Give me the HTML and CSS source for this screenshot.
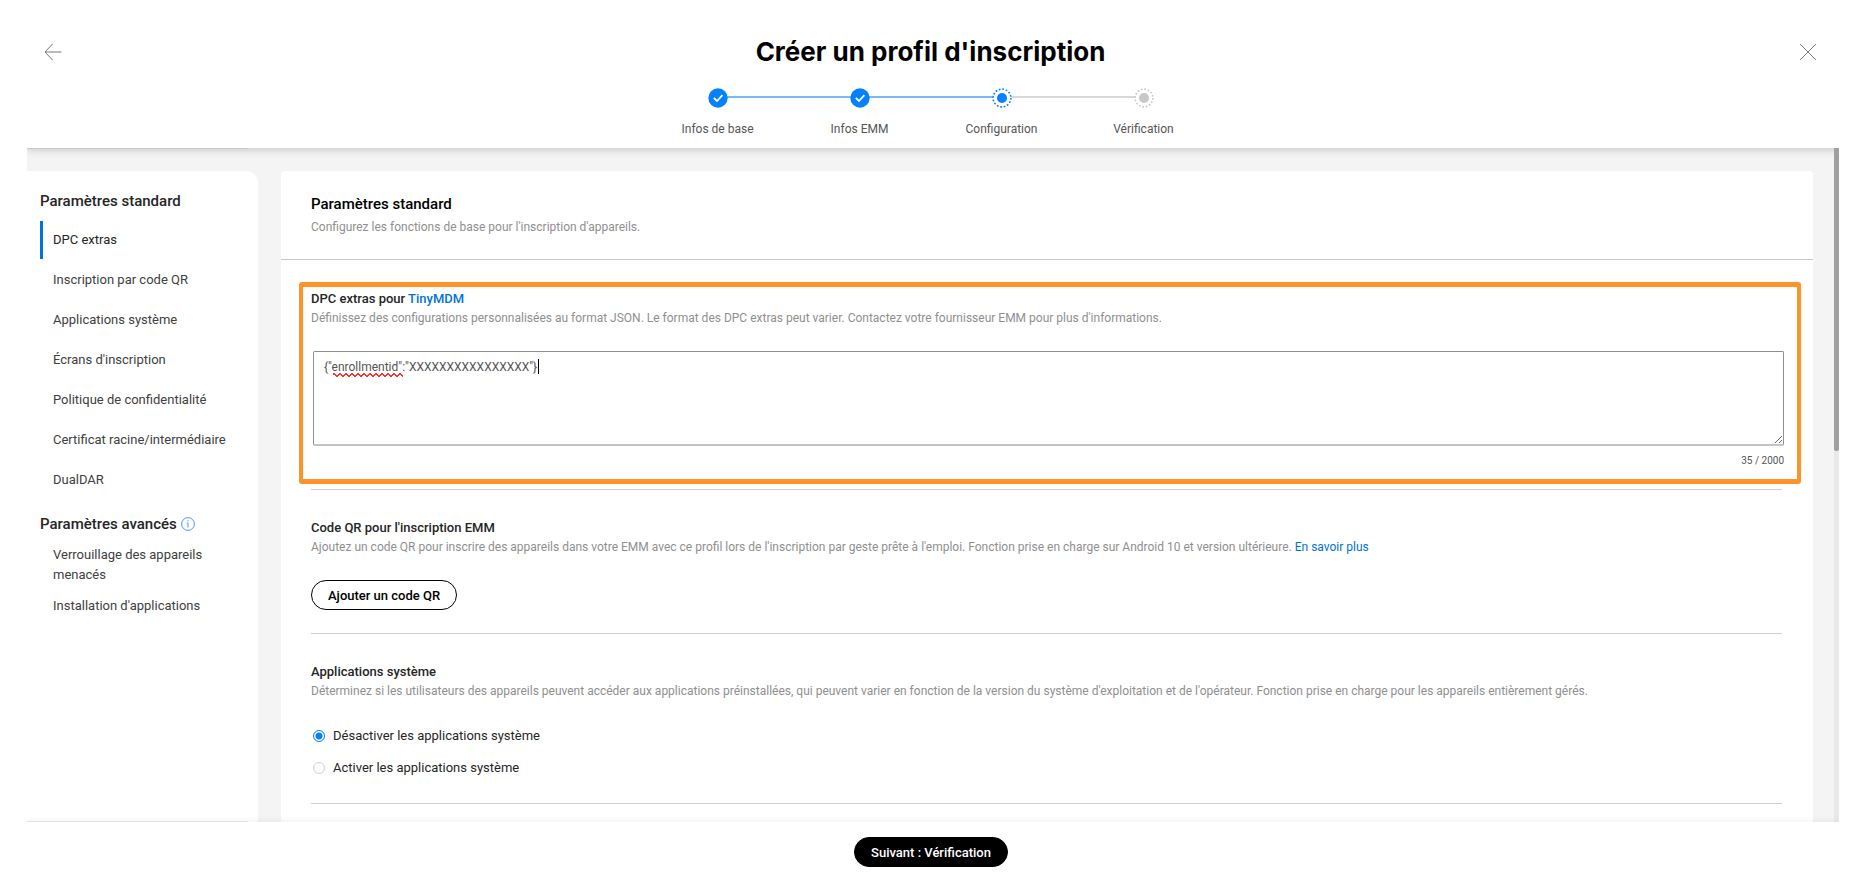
FILE: index.html
```html
<!DOCTYPE html>
<html lang="fr">
<head>
    <meta charset="UTF-8">
    <meta name="viewport" content="width=device-width, initial-scale=1.0">
    <title>Créer un profil d'inscription</title>
    <link rel="stylesheet" href="styles.css">
</head>
<body>

<div class="wizard">
    <!-- Header with title and progress steps -->
    <header class="header">
        <button class="icon-btn" type="button" aria-label="Retour">
            <svg width="18" height="18" viewBox="0 0 18 18"><path d="M8.500 1L1 9l7.500 8M1 9h16.500" /></svg>
        </button>
        <div class="header-center">
            <h1>Créer un profil d'inscription</h1>
            <ol class="steps">
                <li class="step done">
                    <svg class="step-icon" width="20" height="20" viewBox="0 0 20 20">
                        <circle cx="10" cy="10" r="9.700" fill="#0381fe" />
                        <path d="M5.800 9.800l3.200 3.200 5.400-5.900" fill="none" stroke="#fff" stroke-width="1.800" />
                    </svg>
                    <span>Infos de base</span>
                </li>
                <li class="step done">
                    <svg class="step-icon" width="20" height="20" viewBox="0 0 20 20">
                        <circle cx="10" cy="10" r="9.700" fill="#0381fe" />
                        <path d="M5.800 9.800l3.200 3.200 5.400-5.900" fill="none" stroke="#fff" stroke-width="1.800" />
                    </svg>
                    <span>Infos EMM</span>
                </li>
                <li class="step current">
                    <svg class="step-icon" width="20" height="20" viewBox="0 0 20 20">
                        <circle cx="10" cy="10" r="8.900" fill="#fff" stroke="#0381fe" stroke-width="1.600" stroke-dasharray="1.700 1.795" />
                        <circle cx="10" cy="10" r="5" fill="#0381fe" />
                    </svg>
                    <span>Configuration</span>
                </li>
                <li class="step">
                    <svg class="step-icon" width="20" height="20" viewBox="0 0 20 20">
                        <circle cx="10" cy="10" r="8.900" fill="#fff" stroke="#c8c8c8" stroke-width="1.600" stroke-dasharray="1.700 1.795" />
                        <circle cx="10" cy="10" r="5" fill="#c8c8c8" />
                    </svg>
                    <span>Vérification</span>
                </li>
            </ol>
        </div>
        <button class="icon-btn" type="button" aria-label="Fermer">
            <svg width="18" height="18" viewBox="0 0 18 18"><path d="M1 1l16 16M17 1L1 17" /></svg>
        </button>
    </header>

    <div class="content">
        <!-- Left menu -->
        <nav class="sidebar">
            <h2>Paramètres standard</h2>
            <ul class="menu">
                <li><a class="active" href="#dpc">DPC extras</a></li>
                <li><a href="#qr">Inscription par code QR</a></li>
                <li><a href="#apps">Applications système</a></li>
                <li><a href="#screens">Écrans d'inscription</a></li>
                <li><a href="#privacy">Politique de confidentialité</a></li>
                <li><a href="#cert">Certificat racine/intermédiaire</a></li>
                <li><a href="#dualdar">DualDAR</a></li>
            </ul>
            <h2>Paramètres avancés
                <svg class="info" width="14" height="14" viewBox="0 0 14 14">
                    <circle cx="7" cy="7" r="6.400" />
                    <path d="M7 3.200v1.200M5.800 6H7v4.600" />
                </svg>
            </h2>
            <ul class="menu advanced">
                <li><a href="#lock">Verrouillage des appareils menacés</a></li>
                <li><a href="#install">Installation d'applications</a></li>
            </ul>
        </nav>

        <!-- Settings form -->
        <main class="card">
            <div class="card-header">
                <h2>Paramètres standard</h2>
                <p>Configurez les fonctions de base pour l'inscription d'appareils.</p>
            </div>

            <section class="highlight" id="dpc">
                <h3><label for="extras">DPC extras pour</label> <a href="#dpc">TinyMDM</a></h3>
                <p>Définissez des configurations personnalisées au format JSON. Le format des DPC extras peut varier. Contactez votre fournisseur EMM pour plus d'informations.</p>
                <div class="field">
                    <textarea id="extras" spellcheck="false">{"enrollmentid":"XXXXXXXXXXXXXXXX"}</textarea>
                    <span class="spelling"></span>
                    <span class="caret"></span>
                </div>
                <div class="counter">35 / 2000</div>
            </section>

            <section class="block" id="qr">
                <h3>Code QR pour l'inscription EMM</h3>
                <p>Ajoutez un code QR pour inscrire des appareils dans votre EMM avec ce profil lors de l'inscription par geste prête à l'emploi. Fonction prise en charge sur Android 10 et version ultérieure. <a href="#more">En savoir plus</a></p>
                <button class="btn btn-outline" type="button">Ajouter un code QR</button>
            </section>

            <section class="block" id="apps">
                <h3>Applications système</h3>
                <p>Déterminez si les utilisateurs des appareils peuvent accéder aux applications préinstallées, qui peuvent varier en fonction de la version du système d'exploitation et de l'opérateur. Fonction prise en charge pour les appareils entièrement gérés.</p>
                <div class="radios">
                    <label><input type="radio" name="apps" checked> Désactiver les applications système</label>
                    <label><input type="radio" name="apps"> Activer les applications système</label>
                </div>
            </section>

            <div class="block"></div>
        </main>

        <div class="scrollbar"><div class="thumb"></div></div>
    </div>

    <footer class="footer">
        <button class="btn btn-primary" type="button">Suivant : Vérification</button>
    </footer>
</div>

</body>
</html>
```
FILE: styles.css
```css
* {
    box-sizing: border-box;
}

body {
    margin: 0;
    background-color: #fff;
    color: #252525;
    font-family: Roboto, "Noto Sans", sans-serif;
    font-size: 13px;
    line-height: 20px;
}

h1, h2, h3, p, ul, ol {
    margin: 0;
    padding: 0;
}

ul, ol {
    list-style: none;
}

a {
    color: #0072de;
    text-decoration: none;
}

/* Full height layout: header, scrolling content, footer */
.wizard {
    display: flex;
    flex-direction: column;
    height: 100vh;
    margin: 0 20px 0 27px;
}

/* Header */
.header {
    display: flex;
    justify-content: space-between;
    align-items: flex-start;
    height: 148px;
    padding: 33px 22px 0 17px;
    flex-shrink: 0;
    position: relative;
    z-index: 2;
    background-color: #fff;
    box-shadow: 0 2px 8px rgba(0, 0, 0, 0.18);
    clip-path: inset(0 0 -12px 0);
}

.header h1 {
    font-family: Inter, Roboto, sans-serif;
    font-size: 26px;
    font-weight: 700;
    line-height: 38px;
    color: #000;
    text-align: center;
}

.icon-btn {
    display: flex;
    margin: 0;
    padding: 10px 0;
    border: none;
    background: none;
    cursor: pointer;
}

.icon-btn svg {
    fill: none;
    stroke: #777;
    stroke-width: 1;
}

/* Progress steps */
.steps {
    display: flex;
    justify-content: center;
    margin-top: 17px;
}

.step {
    display: flex;
    flex-direction: column;
    align-items: center;
    gap: 11px;
    width: 142px;
    position: relative;
    font-size: 12px;
    color: #555;
}

.step-icon {
    position: relative;
    z-index: 1;
}

/* Line from one step to the next */
.step:not(:last-child)::after {
    content: "";
    position: absolute;
    top: 8px;
    left: 50%;
    width: 100%;
    height: 2px;
    background-color: #d8d8d8;
}

.step.done:not(:last-child)::after {
    background-color: #7abafa;
}

/* Content area */
.content {
    display: flex;
    gap: 23px;
    flex: 1;
    min-height: 0;
    overflow: hidden;
    position: relative;
    padding: 23px 26px 0 0;
    background-color: #f4f4f4;
}

/* Edges of the menu column */
.content::before {
    content: "";
    position: absolute;
    top: 0;
    bottom: 0;
    left: 0;
    width: 221px;
    z-index: 3;
    border-top: 1px solid #c8c8c8;
    border-bottom: 1px solid #e4e4e4;
    pointer-events: none;
}

/* Left menu */
.sidebar {
    width: 231px;
    flex-shrink: 0;
    padding: 20px 13px;
    background-color: #fff;
    border-radius: 0 12px 0 0;
}

.sidebar h2,
.card-header h2 {
    font-size: 15px;
    font-weight: 500;
    line-height: 20px;
}

.menu {
    display: flex;
    flex-direction: column;
    gap: 2px;
    margin: 10px 0 15px;
}

.menu a {
    display: block;
    padding: 9px 0 9px 10px;
    border-left: 3px solid transparent;
    color: #404040;
}

.menu a.active {
    border-left-color: #0072de;
    color: #252525;
}

.menu.advanced {
    gap: 11px;
    margin: 11px 0;
}

.menu.advanced a {
    padding: 0 40px 0 10px;
}

.info {
    vertical-align: -2px;
    fill: none;
    stroke: #3e9bf7;
    stroke-width: 1;
}

/* Main card */
.card {
    flex: 1;
    min-width: 0;
    background-color: #fff;
    border-radius: 4px 4px 0 0;
}

.card-header {
    padding: 23px 30px 22px;
    border-bottom: 1px solid #c8c8c8;
}

.card-header h2 {
    color: #000;
}

.card-header p {
    margin-top: 3px;
}

.card h3 {
    font-size: 13px;
    font-weight: 500;
    line-height: 18px;
}

.card p {
    font-size: 12px;
    line-height: 20px;
    color: #8f8f8f;
}

/* Orange frame around the DPC section */
.highlight {
    margin: 22px 12px 5px 18px;
    padding: 3px 13px 8px 8px;
    border: solid #ff9228;
    border-width: 5px 4px;
    border-radius: 3px;
}

.field {
    position: relative;
    margin: 23px 0 5px 2px;
}

.field textarea {
    display: block;
    width: 100%;
    height: 95px;
    padding: 5px 10px;
    border: 1px solid #8f8f8f;
    border-bottom: 2px solid #c3c3c3;
    border-radius: 2px;
    outline: none;
    background-color: #fff;
    color: #555;
    font-family: inherit;
    font-size: 12px;
    line-height: 20px;
}

/* Spelling mark and text cursor shown over the textarea */
.spelling {
    position: absolute;
    top: 22px;
    left: 20px;
    width: 70px;
    height: 4px;
    background:
        linear-gradient(45deg, transparent 40%, #f33 40%, #f33 60%, transparent 60%) 0 0 / 6px 4px,
        linear-gradient(-45deg, transparent 40%, #f33 40%, #f33 60%, transparent 60%) 3px 0 / 6px 4px;
}

.caret {
    position: absolute;
    top: 8px;
    left: 225px;
    width: 1px;
    height: 15px;
    background-color: #000;
}

.counter {
    font-size: 10px;
    text-align: right;
    color: #555;
}

/* Setting blocks, split by a line */
.block {
    margin: 0 31px 0 30px;
    padding: 29px 0 23px;
    border-top: 1px solid #d0d0d0;
}

.btn {
    height: 30px;
    padding: 0 16px;
    border: 1px solid #000;
    border-radius: 15px;
    font-family: inherit;
    font-size: 13px;
    font-weight: 500;
    cursor: pointer;
}

.btn-outline {
    display: block;
    margin-top: 23px;
    background-color: #fff;
    color: #000;
}

.btn-primary {
    background-color: #000;
    color: #fff;
}

.radios {
    display: flex;
    flex-direction: column;
    align-items: flex-start;
    gap: 12px;
    margin: 25px 0 2px;
}

.radios label {
    display: flex;
    align-items: center;
    gap: 8px;
}

.radios input {
    appearance: none;
    width: 12px;
    height: 12px;
    margin: 0 0 0 2px;
    border: 1px solid #d0d0d0;
    border-radius: 50%;
}

.radios input:checked {
    border-color: #0381fe;
    background: radial-gradient(circle, #0381fe 3px, #fff 4px);
}

/* Scrollbar */
.scrollbar {
    position: absolute;
    top: 0;
    right: 0;
    bottom: 0;
    width: 5px;
    z-index: 2;
    background-color: #e9e9e9;
}

.thumb {
    height: 45%;
    background-color: #a0a0a0;
    border-radius: 0 0 2px 2px;
}

/* Footer */
.footer {
    display: flex;
    justify-content: center;
    align-items: flex-start;
    height: 67px;
    padding: 15px 4px 0 0;
    flex-shrink: 0;
    position: relative;
    z-index: 2;
    background-color: #fff;
    box-shadow: 0 -2px 6px rgba(0, 0, 0, 0.05);
    clip-path: inset(-10px 0 0 0);
}
```
